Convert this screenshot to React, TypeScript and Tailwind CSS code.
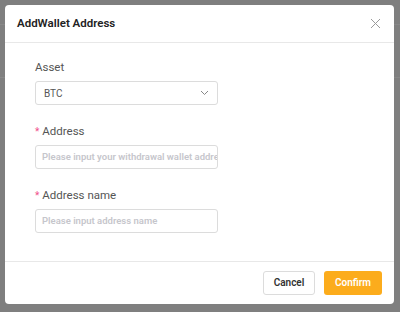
import React from 'react'

const Field = ({ label, required, children }: { label: string; required?: boolean; children: React.ReactNode }) => (
  <div className="flex flex-col">
    <div className="flex items-center h-[16px] text-[11.5px] text-[#555]">
      {required && <span className="text-[#f0508a] text-[10px] mr-[3px] leading-none">*</span>}
      {label}
    </div>
    <div className="mt-[5px]">{children}</div>
  </div>
)

export default function App() {
  return (
    <div
      className="relative w-[400px] h-[312px] bg-[#7f7f7f] p-[5px] pr-[6px] pb-[8px]"
      style={{ fontFamily: 'Roboto, "Liberation Sans", sans-serif' }}
    >
      <div className="absolute left-0 right-0 top-[24px] h-px bg-[#888]" />
      <div className="absolute left-0 right-0 top-[77px] h-px bg-[#888]" />
      <div className="relative flex flex-col h-full bg-white rounded-[4px]">
        <div className="flex items-center justify-between h-[38px] px-[12px] border-b border-[#e8e8e8]">
          <span className="text-[11.5px] font-semibold text-[#222]">AddWallet Address</span>
          <svg width="11" height="11" viewBox="0 0 11 11" className="mr-[1px]">
            <path d="M1 1L10 10M10 1L1 10" stroke="#9a9a9a" strokeWidth="1" />
          </svg>
        </div>
        <div className="flex-1 flex flex-col gap-[19px] pl-[30px] pt-[17px]">
          <Field label="Asset">
            <div className="flex items-center justify-between w-[183px] h-[24px] border border-[#dcdcdc] rounded-[3px] px-[8px]">
              <span className="text-[10px] text-[#555]">BTC</span>
              <svg width="9" height="6" viewBox="0 0 9 6">
                <path d="M1 1L4.5 4.5L8 1" stroke="#888" strokeWidth="1" fill="none" />
              </svg>
            </div>
          </Field>
          <Field label="Address" required>
            <div className="flex items-center w-[183px] h-[24px] border border-[#dcdcdc] rounded-[3px] px-[6px] overflow-hidden">
              <span className="text-[9.5px] font-semibold text-[#c6c6cc] whitespace-nowrap">Please input your withdrawal wallet address</span>
            </div>
          </Field>
          <Field label="Address name" required>
            <div className="flex items-center w-[183px] h-[24px] border border-[#dcdcdc] rounded-[3px] px-[6px] overflow-hidden">
              <span className="text-[9.5px] font-semibold text-[#c6c6cc] whitespace-nowrap">Please input address name</span>
            </div>
          </Field>
        </div>
        <div className="flex items-center justify-end gap-[9px] h-[43px] px-[12px] border-t border-[#e8e8e8] pb-[1px]">
          <button className="w-[52px] h-[24px] border border-[#dcdcdc] rounded-[3px] text-[10px] font-semibold text-[#333] bg-white">
            Cancel
          </button>
          <button className="w-[58px] h-[24px] rounded-[3px] text-[10px] font-semibold text-white bg-[#fcac1c]">
            Confirm
          </button>
        </div>
      </div>
    </div>
  )
}
